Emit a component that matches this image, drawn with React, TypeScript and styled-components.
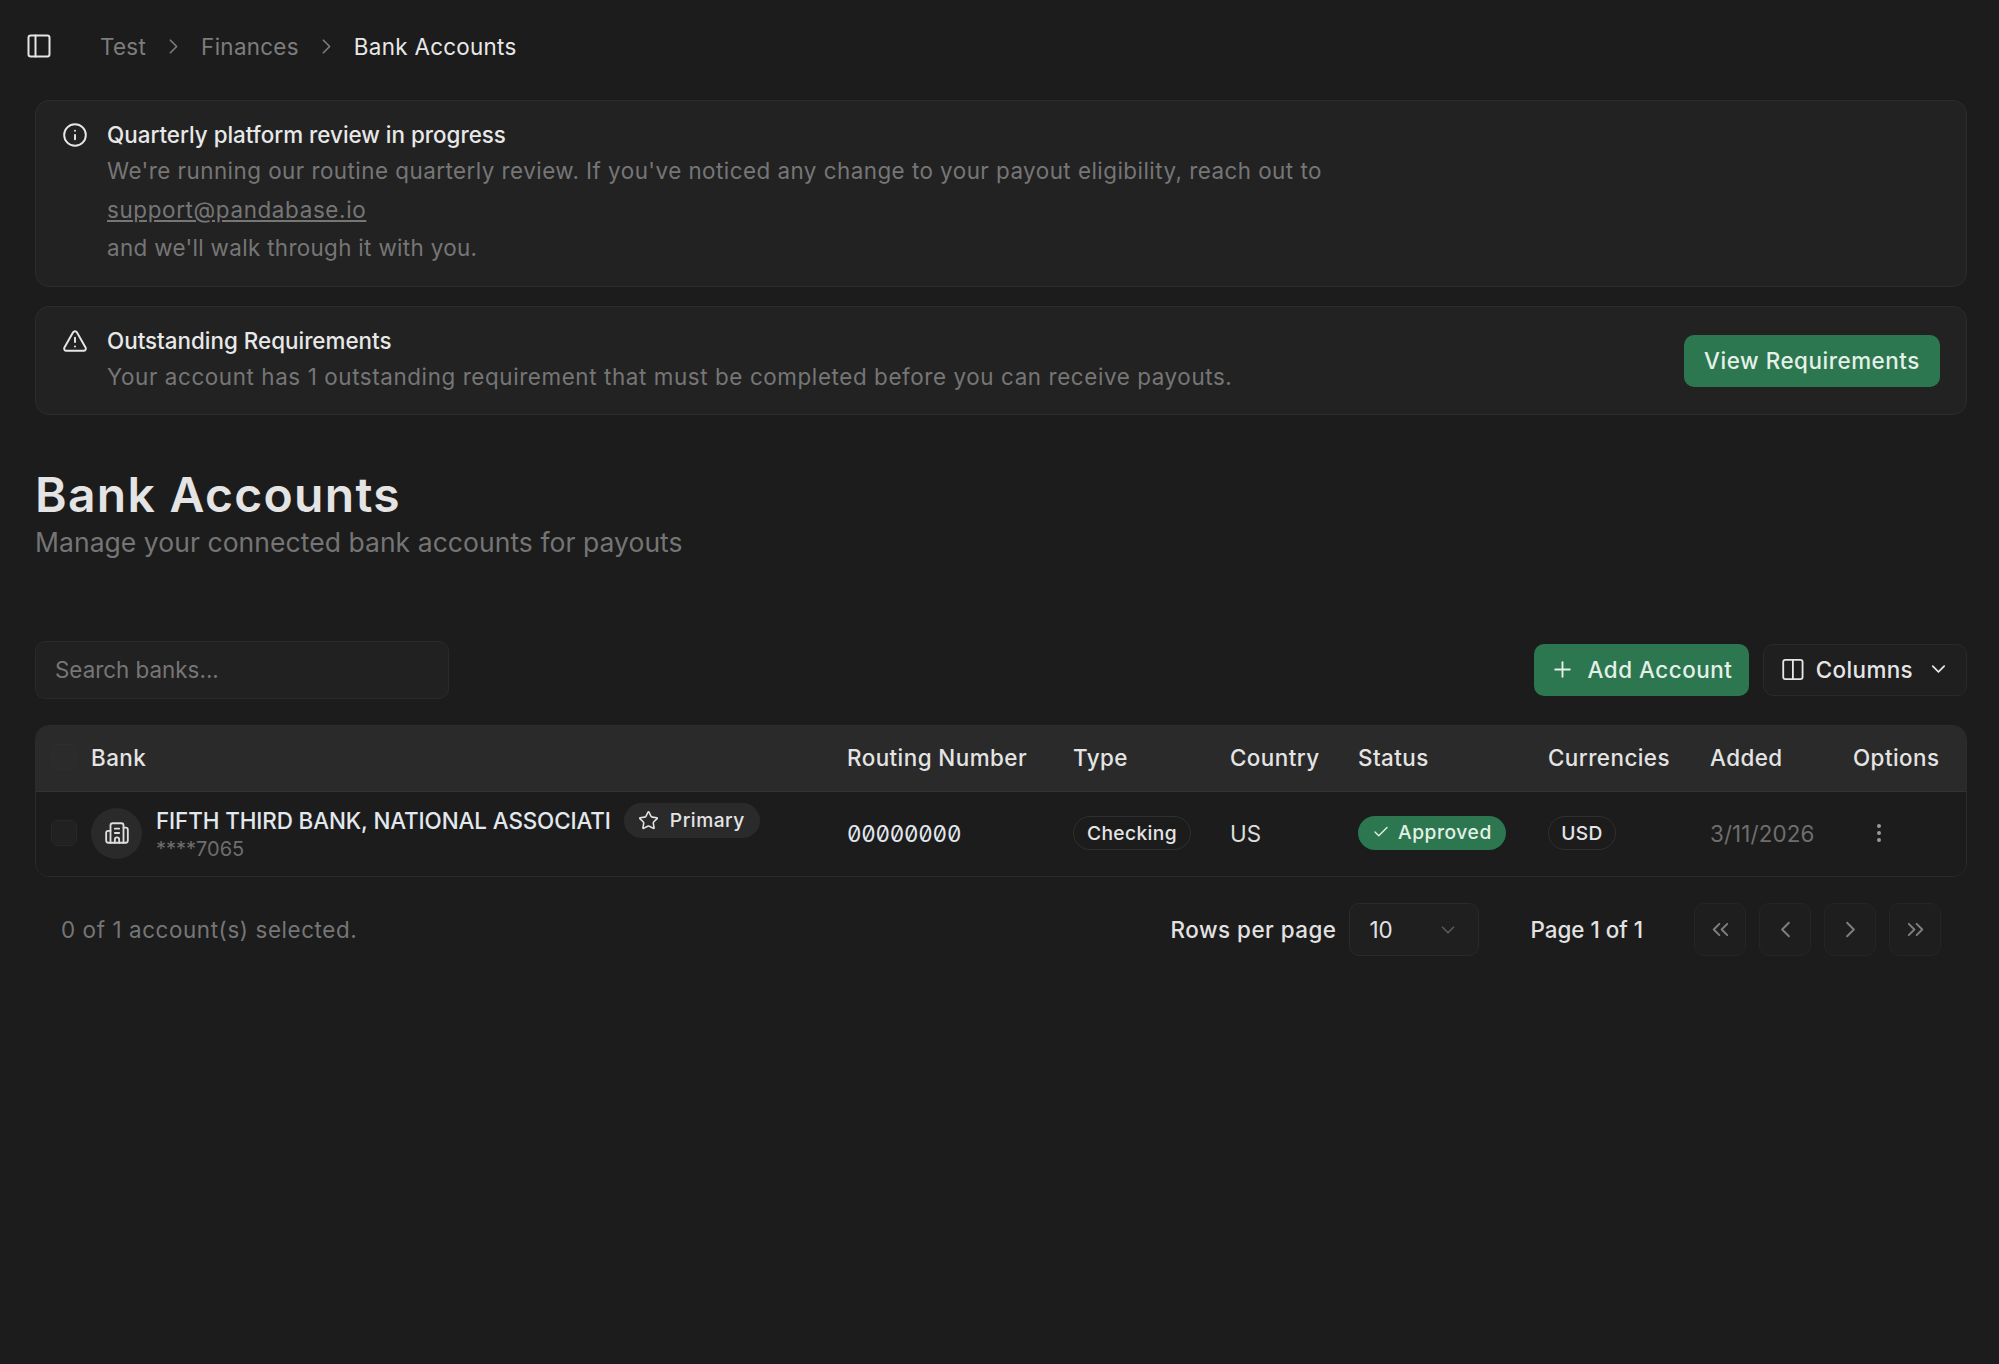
import styled, { createGlobalStyle } from "styled-components";
import {
  Building2,
  Check,
  ChevronDown,
  ChevronLeft,
  ChevronRight,
  ChevronsLeft,
  ChevronsRight,
  Columns2,
  EllipsisVertical,
  Info,
  PanelLeft,
  Plus,
  Star,
  TriangleAlert,
} from "lucide-react";

const GlobalStyle = createGlobalStyle`
  * { box-sizing: border-box; }
  html, body { margin: 0; background: #1c1c1c; }
  body {
    color: #ececec;
    font-family: "Inter", "Liberation Sans", sans-serif;
    font-size: 22.4px;
  }
`;

const App: React.FC = () => {
  return (
    <Page>
      <GlobalStyle />
      <Breadcrumbs>
        <SidebarToggle>
          <PanelLeft size={28} strokeWidth={1.7} />
        </SidebarToggle>
        <Crumb>Test</Crumb>
        <CrumbSep>
          <ChevronRight size={25} strokeWidth={1.6} />
        </CrumbSep>
        <Crumb>Finances</Crumb>
        <CrumbSep>
          <ChevronRight size={25} strokeWidth={1.6} />
        </CrumbSep>
        <Crumb $current>Bank Accounts</Crumb>
      </Breadcrumbs>

      <Main>
        <Alert>
          <AlertIcon>
            <Info size={26} strokeWidth={1.8} />
          </AlertIcon>
          <AlertBody>
            <AlertTitle>Quarterly platform review in progress</AlertTitle>
            <AlertText $tracking={0.47}>
              We're running our routine quarterly review. If you've noticed any
              change to your payout eligibility, reach out to
            </AlertText>
            <AlertText $tracking={0.65}>
              <AlertLink href="#">support@pandabase.io</AlertLink>
            </AlertText>
            <AlertText $tracking={0.33}>and we'll walk through it with you.</AlertText>
          </AlertBody>
        </Alert>

        <Alert $spaced>
          <AlertIcon>
            <TriangleAlert size={26} strokeWidth={1.8} />
          </AlertIcon>
          <AlertBody>
            <AlertTitle>Outstanding Requirements</AlertTitle>
            <AlertText $tracking={0.6}>
              Your account has 1 outstanding requirement that must be completed
              before you can receive payouts.
            </AlertText>
          </AlertBody>
          <PrimaryButton $width={256}>View Requirements</PrimaryButton>
        </Alert>

        <TitleBlock>
          <PageTitle>Bank Accounts</PageTitle>
          <PageSubtitle>Manage your connected bank accounts for payouts</PageSubtitle>
        </TitleBlock>

        <Toolbar>
          <SearchInput placeholder="Search banks..." readOnly />
          <ToolbarActions>
            <PrimaryButton $width={215}>
              <Plus size={25} strokeWidth={1.8} />
              Add Account
            </PrimaryButton>
            <GhostButton>
              <Columns2 size={27} strokeWidth={1.7} />
              Columns
              <ChevronDown size={24} strokeWidth={1.8} />
            </GhostButton>
          </ToolbarActions>
        </Toolbar>

        <Table>
          <HeaderRow>
            <CheckCell>
              <Checkbox $inHeader />
            </CheckCell>
            <HeaderCell>Bank</HeaderCell>
            <HeaderCell>Routing Number</HeaderCell>
            <HeaderCell>Type</HeaderCell>
            <HeaderCell>Country</HeaderCell>
            <HeaderCell>Status</HeaderCell>
            <HeaderCell>Currencies</HeaderCell>
            <HeaderCell>Added</HeaderCell>
            <HeaderCell>Options</HeaderCell>
          </HeaderRow>
          <BodyRow>
            <CheckCell>
              <Checkbox />
            </CheckCell>
            <BankCell>
              <BankAvatar>
                <Building2 size={26} strokeWidth={1.7} />
              </BankAvatar>
              <BankInfo>
                <BankNameLine>
                  <BankName>FIFTH THIRD BANK, NATIONAL ASSOCIATI</BankName>
                  <PrimaryBadge>
                    <Star size={21} strokeWidth={1.8} />
                    Primary
                  </PrimaryBadge>
                </BankNameLine>
                <BankMask>****7065</BankMask>
              </BankInfo>
            </BankCell>
            <RoutingCell>00000000</RoutingCell>
            <BodyCell>
              <OutlinePill $width={118}>Checking</OutlinePill>
            </BodyCell>
            <BodyCell>US</BodyCell>
            <BodyCell>
              <StatusPill>
                <Check size={18} strokeWidth={1.8} />
                Approved
              </StatusPill>
            </BodyCell>
            <BodyCell>
              <OutlinePill $width={68}>USD</OutlinePill>
            </BodyCell>
            <DateCell>3/11/2026</DateCell>
            <OptionsCell>
              <EllipsisVertical size={24} strokeWidth={2} />
            </OptionsCell>
          </BodyRow>
        </Table>

        <Footer>
          <SelectedCount>0 of 1 account(s) selected.</SelectedCount>
          <Pagination>
            <FooterLabel>Rows per page</FooterLabel>
            <RowsSelect>
              10
              <ChevronDown size={22} strokeWidth={1.8} />
            </RowsSelect>
            <PageLabel>Page 1 of 1</PageLabel>
            <PagerButtons>
              <PagerButton>
                <ChevronsLeft size={27} strokeWidth={1.7} />
              </PagerButton>
              <PagerButton>
                <ChevronLeft size={27} strokeWidth={1.7} />
              </PagerButton>
              <PagerButton>
                <ChevronRight size={27} strokeWidth={1.7} />
              </PagerButton>
              <PagerButton>
                <ChevronsRight size={27} strokeWidth={1.7} />
              </PagerButton>
            </PagerButtons>
          </Pagination>
        </Footer>
      </Main>
    </Page>
  );
};

const Page = styled.div`
  min-height: 1364px;
  background: #1c1c1c;
`;

const Breadcrumbs = styled.nav`
  height: 100px;
  padding: 0 0 8px 25px;
  display: flex;
  align-items: center;
`;

const SidebarToggle = styled.span`
  display: flex;
  width: 75px;
  color: #e6e6e6;
`;

const Crumb = styled.span<{ $current?: boolean }>`
  color: ${({ $current }) => ($current ? "#e8e8e8" : "#7d7d7d")};
  letter-spacing: 0.3px;
`;

const CrumbSep = styled.span`
  display: flex;
  justify-content: center;
  width: 55px;
  color: #7d7d7d;
`;

const Main = styled.main`
  padding: 0 32px 0 35px;
`;

const Alert = styled.section<{ $spaced?: boolean }>`
  display: flex;
  align-items: ${({ $spaced }) => ($spaced ? "center" : "flex-start")};
  margin-top: ${({ $spaced }) => ($spaced ? "19px" : "0")};
  padding: 18px 26px 18px 26px;
  background: #222222;
  border: 1px solid #2c2c2c;
  border-radius: 14px;
`;

const AlertIcon = styled.span`
  display: flex;
  width: 45px;
  flex: none;
  color: #e6e6e6;
  align-self: flex-start;
  padding-top: 3px;
`;

const AlertBody = styled.div`
  flex: 1;
`;

const AlertTitle = styled.h3`
  margin: 0 0 1px;
  font-size: 22.4px;
  line-height: 32px;
  font-weight: 500;
  color: #e8e8e8;
`;

const AlertText = styled.div<{ $tracking: number }>`
  font-size: 22.4px;
  line-height: 38.6px;
  color: #767676;
  letter-spacing: ${({ $tracking }) => $tracking}px;
`;

const AlertLink = styled.a`
  color: #767676;
  text-decoration: underline;
`;

const PrimaryButton = styled.button<{ $width: number }>`
  display: flex;
  align-items: center;
  justify-content: center;
  gap: 12px;
  width: ${({ $width }) => $width}px;
  height: 52px;
  padding-bottom: 2px;
  border: none;
  border-radius: 10px;
  background: #2c774f;
  color: #e4f0e8;
  font: 500 22.4px "Inter", "Liberation Sans", sans-serif;
  letter-spacing: 0.55px;
`;

const TitleBlock = styled.header`
  margin-top: 52px;
`;

const PageTitle = styled.h1`
  margin: 0;
  font-size: 48px;
  line-height: 55px;
  font-weight: 600;
  letter-spacing: 1.3px;
  color: #e4e4e4;
`;

const PageSubtitle = styled.p`
  margin: 0;
  font-size: 26.5px;
  line-height: 40px;
  color: #757575;
  letter-spacing: 0.05px;
`;

const Toolbar = styled.div`
  display: flex;
  align-items: center;
  justify-content: space-between;
  margin-top: 79px;
  height: 58px;
`;

const SearchInput = styled.input`
  width: 414px;
  height: 58px;
  padding: 0 19px 2px;
  background: #212121;
  border: 1px solid #2a2a2a;
  border-radius: 10px;
  font: 400 22.4px "Inter", "Liberation Sans", sans-serif;
  outline: none;

  &::placeholder {
    color: #767676;
  }
`;

const ToolbarActions = styled.div`
  display: flex;
  gap: 14px;
`;

const GhostButton = styled.button`
  display: flex;
  align-items: center;
  gap: 10px;
  width: 204px;
  height: 52px;
  padding: 0 16px 2px;
  background: #1f1f1f;
  border: 1px solid #2a2a2a;
  border-radius: 10px;
  color: #e6e6e6;
  font: 500 22.4px "Inter", "Liberation Sans", sans-serif;
  letter-spacing: 0.4px;

  svg:last-child {
    margin-left: 4px;
  }
`;

const Table = styled.div`
  margin-top: 26px;
  border: 1px solid #2c2c2c;
  border-radius: 14px;
  overflow: hidden;
`;

const HeaderRow = styled.div`
  display: grid;
  grid-template-columns: 55px 756px 226px 157px 128px 190px 162px 143px 113px;
  align-items: center;
  height: 66px;
  padding-bottom: 3px;
  background: #2a2a2a;
  border-bottom: 1px solid #333333;
`;

const BodyRow = styled.div`
  display: grid;
  grid-template-columns: 55px 756px 226px 157px 128px 190px 162px 143px 113px;
  align-items: center;
  height: 84px;
  padding-bottom: 2px;
  background: #1c1c1c;
`;

const HeaderCell = styled.div`
  font-size: 22.4px;
  font-weight: 500;
  letter-spacing: 0.45px;
  color: #e4e4e4;
`;

const BodyCell = styled.div`
  display: flex;
  align-items: center;
  font-size: 22.4px;
  color: #dedede;
`;

const CheckCell = styled.div`
  display: flex;
  padding-left: 15px;
`;

const Checkbox = styled.span<{ $inHeader?: boolean }>`
  width: 26px;
  height: 26px;
  border-radius: 6px;
  background: ${({ $inHeader }) => ($inHeader ? "#2b2b2b" : "#212121")};
  border: 1px solid ${({ $inHeader }) => ($inHeader ? "#2e2e2e" : "#282828")};
`;

const BankCell = styled.div`
  display: flex;
  align-items: center;
  gap: 14px;
`;

const BankAvatar = styled.span`
  display: flex;
  align-items: center;
  justify-content: center;
  width: 51px;
  height: 51px;
  border-radius: 50%;
  background: #2a2a2a;
  color: #dedede;
`;

const BankInfo = styled.div`
  display: flex;
  flex-direction: column;
  margin-top: -4px;
`;

const BankNameLine = styled.div`
  display: flex;
  align-items: center;
  gap: 13px;
`;

const BankName = styled.span`
  font-size: 22.4px;
  font-weight: 500;
  letter-spacing: -0.1px;
  color: #e2e8ee;
`;

const PrimaryBadge = styled.span`
  display: flex;
  align-items: center;
  gap: 11px;
  height: 35px;
  padding: 0 15px 0 14px;
  border-radius: 18px;
  background: #2a2a2a;
  font-size: 19.2px;
  font-weight: 500;
  letter-spacing: 0.5px;
  color: #e4e4e4;

  svg {
    flex: none;
  }
`;

const BankMask = styled.span`
  font-size: 20px;
  line-height: 22px;
  color: #6e6e6e;
`;

const RoutingCell = styled(BodyCell)`
  font-size: 22.4px;
  font-feature-settings: "zero", "tnum";
  letter-spacing: -0.25px;
  color: #e2e8ee;
`;

const OutlinePill = styled.span<{ $width: number }>`
  display: flex;
  align-items: center;
  justify-content: center;
  width: ${({ $width }) => $width}px;
  height: 34px;
  border: 1px solid #2f2f2f;
  border-radius: 17px;
  font-size: 19.2px;
  font-weight: 500;
  letter-spacing: 0.4px;
  color: #e4e4e4;
`;

const StatusPill = styled.span`
  display: flex;
  align-items: center;
  gap: 8px;
  width: 148px;
  height: 34px;
  padding: 0 14px 2px;
  border-radius: 17px;
  background: #2c774f;
  font-size: 19.2px;
  font-weight: 500;
  letter-spacing: 0.55px;
  color: #e4f0e8;
`;

const DateCell = styled(BodyCell)`
  letter-spacing: 0.1px;
  color: #6e6e6e;
`;

const OptionsCell = styled(BodyCell)`
  padding-left: 14px;
  color: #9a9a9a;
`;

const Footer = styled.div`
  display: flex;
  align-items: center;
  justify-content: space-between;
  margin-top: 26px;
  padding: 0 26px 0 26px;
`;

const SelectedCount = styled.span`
  color: #767676;
  letter-spacing: 0.6px;
`;

const Pagination = styled.div`
  display: flex;
  align-items: center;
`;

const FooterLabel = styled.span`
  font-weight: 500;
  letter-spacing: 0.5px;
  color: #e2e2e2;
`;

const RowsSelect = styled.div`
  display: flex;
  align-items: center;
  justify-content: space-between;
  width: 130px;
  height: 53px;
  margin-left: 13px;
  padding: 0 19px;
  background: #1f1f1f;
  border: 1px solid #2a2a2a;
  border-radius: 10px;
  color: #e2e2e2;

  svg {
    color: #5a5a5a;
  }
`;

const PageLabel = styled.span`
  margin-left: 51px;
  font-weight: 500;
  color: #e2e2e2;
`;

const PagerButtons = styled.div`
  display: flex;
  gap: 13px;
  margin-left: 51px;
`;

const PagerButton = styled.button`
  display: flex;
  align-items: center;
  justify-content: center;
  width: 52px;
  height: 53px;
  padding: 0;
  background: #1e1e1e;
  border: 1px solid #252525;
  border-radius: 10px;
  color: #7f7f7f;
`;

export default App;
